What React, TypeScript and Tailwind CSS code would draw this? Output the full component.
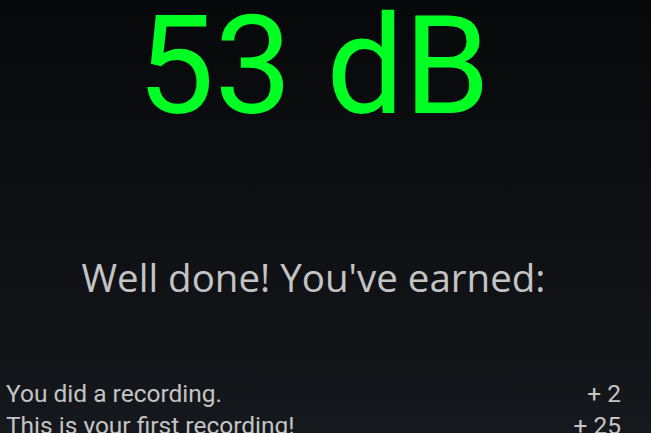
export default function App() {
  const rewards = [
    { label: 'You did a recording.', points: '+ 2' },
    { label: 'This is your first recording!', points: '+ 25' },
  ];

  return (
    <div className="h-[433px] w-[651px] overflow-hidden bg-gradient-to-b from-[#07080a] to-[#15181c] font-['Roboto',sans-serif]">
      {/* Level readout */}
      <div className="pr-[24px] text-center">
        <div className="-mt-[3px] text-[138px] leading-none text-[#00ff22]">53 dB</div>
      </div>

      {/* Message */}
      <div className="mt-[123px] pr-[24px] text-center font-['Open_Sans',sans-serif] text-[38.5px] leading-[38.5px] text-[#c4c4c4]">
        Well done! You've earned:
      </div>

      {/* Earned points */}
      <div className="mt-[81px] flex flex-col pl-[6px] pr-[30px] text-[24.5px] leading-[32px] text-[#c4c4c4]">
        {rewards.map((r) => (
          <div key={r.label} className="flex justify-between">
            <span>{r.label}</span>
            <span>{r.points}</span>
          </div>
        ))}
      </div>
    </div>
  );
}
